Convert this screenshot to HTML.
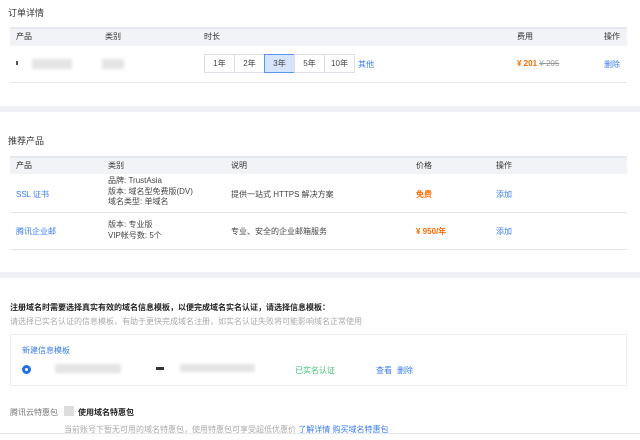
<!DOCTYPE html><html><head><meta charset="utf-8"><style>
*{margin:0;padding:0;box-sizing:border-box}
body{width:640px;height:440px;background:#fff;font-family:"Liberation Sans","Noto Sans CJK SC",sans-serif;font-size:8px;color:#333;position:relative;overflow:hidden}
.a{position:absolute;white-space:nowrap}
.hd{position:absolute;left:10px;width:617px;background:#f2f3f6;border-top:2px solid #e5e8ee}
.ln{position:absolute;left:10px;width:617px;height:1px;background:#e3e6eb}
.gb{position:absolute;left:0;width:640px;background:#f0f1f5}
.b{color:#3a7cf0}.o{color:#ff6a00;font-weight:bold}.g{color:#999}
.blur{position:absolute;background:#e4e4e4;filter:blur(1.5px)}
.btn{position:absolute;top:54px;height:19px;border:1px solid #dcdfe5;background:#fff;text-align:center;line-height:17px;font-size:8px;color:#444}
</style></head><body>
<div class="a" style="left:8px;top:6px;font-size:9px">订单详情</div>
<div class="hd" style="top:27px;height:19px"></div>
<div class="a" style="left:16px;top:31px">产品</div><div class="a" style="left:105px;top:31px">类别</div><div class="a" style="left:204px;top:31px">时长</div><div class="a" style="left:517px;top:31px">费用</div><div class="a" style="left:604px;top:31px">操作</div>
<div class="blur" style="left:32px;top:59px;width:40px;height:10px"></div><div class="a" style="left:16px;top:61px;width:2px;height:4px;background:#555"></div>
<div class="blur" style="left:102px;top:59px;width:22px;height:10px"></div>
<div class="btn" style="left:204px;width:31px">1年</div><div class="btn" style="left:234px;width:31px">2年</div><div class="btn" style="left:264px;width:31px;background:#d6e5fb;border-color:#5c94ec">3年</div><div class="btn" style="left:294px;width:31px">5年</div><div class="btn" style="left:324px;width:31px">10年</div>
<div class="a b" style="left:358px;top:59px">其他</div>
<div class="a" style="left:517px;top:59px"><span class="o">¥ 201</span> <span class="g" style="text-decoration:line-through">¥ 205</span></div>
<div class="a b" style="left:604px;top:59px">删除</div>
<div class="ln" style="top:82px"></div>
<div class="gb" style="top:106px;height:6px"></div>
<div class="a" style="left:8px;top:134px;font-size:9px">推荐产品</div>
<div class="hd" style="top:156px;height:18px"></div>
<div class="a" style="left:16px;top:160px">产品</div><div class="a" style="left:108px;top:160px">类别</div><div class="a" style="left:231px;top:160px">说明</div><div class="a" style="left:416px;top:160px">价格</div><div class="a" style="left:496px;top:160px">操作</div>
<div class="a b" style="left:16px;top:189px">SSL 证书</div>
<div class="a" style="left:108px;top:176px;line-height:10.5px;color:#444">品牌: TrustAsia<br>版本: 域名型免费版(DV)<br>域名类型: 单域名</div>
<div class="a" style="left:231px;top:189px;color:#444">提供一站式 HTTPS 解决方案</div>
<div class="a o" style="left:416px;top:189px">免费</div><div class="a b" style="left:496px;top:189px">添加</div>
<div class="ln" style="top:212px"></div>
<div class="a b" style="left:16px;top:226px">腾讯企业邮</div>
<div class="a" style="left:108px;top:220px;line-height:10.5px;color:#444">版本: 专业版<br>VIP帐号数: 5个</div>
<div class="a" style="left:231px;top:226px;color:#444">专业、安全的企业邮箱服务</div>
<div class="a o" style="left:416px;top:226px">¥ 950/年</div><div class="a b" style="left:496px;top:226px">添加</div>
<div class="ln" style="top:249px"></div>
<div class="gb" style="top:272px;height:6px"></div>
<div class="a" style="left:10px;top:302px;font-weight:bold;color:#222">注册域名时需要选择真实有效的域名信息模板，以便完成域名实名认证，请选择信息模板：</div>
<div class="a" style="left:10px;top:316px;color:#aaa">请选择已实名认证的信息模板，有助于更快完成域名注册，如实名认证失败将可能影响域名正常使用</div>
<div class="a" style="left:10px;top:334px;width:617px;height:52px;border:1px solid #eceef2"></div>
<div class="a b" style="left:22px;top:345px">新建信息模板</div>
<div class="a" style="left:22px;top:365px;width:9px;height:9px;border-radius:50%;border:3px solid #1e6fe8"></div>
<div class="blur" style="left:55px;top:364px;width:66px;height:9px"></div><div class="blur" style="left:180px;top:364px;width:75px;height:8px"></div>
<div class="a" style="left:156px;top:367px;width:8px;height:3px;background:#333"></div>
<div class="a" style="left:295px;top:365px;color:#3fc07a">已实名认证</div>
<div class="a b" style="left:376px;top:365px">查看</div><div class="a b" style="left:397px;top:365px">删除</div>
<div class="a" style="left:10px;top:407px;color:#777">腾讯云特惠包</div>
<div class="a" style="left:64px;top:406px;width:10px;height:10px;background:#ddd"></div>
<div class="a" style="left:78px;top:407px;font-weight:bold;color:#222">使用域名特惠包</div>
<div class="a" style="left:64px;top:424px;color:#aaa">当前账号下暂无可用的域名特惠包，使用特惠包可享受超低优惠价 <span class="b">了解详情</span> <span class="b">购买域名特惠包</span></div>
<div class="gb" style="top:433px;height:7px;background:#fff;border-top:1px solid #e6e8ee"></div>
</body></html>
